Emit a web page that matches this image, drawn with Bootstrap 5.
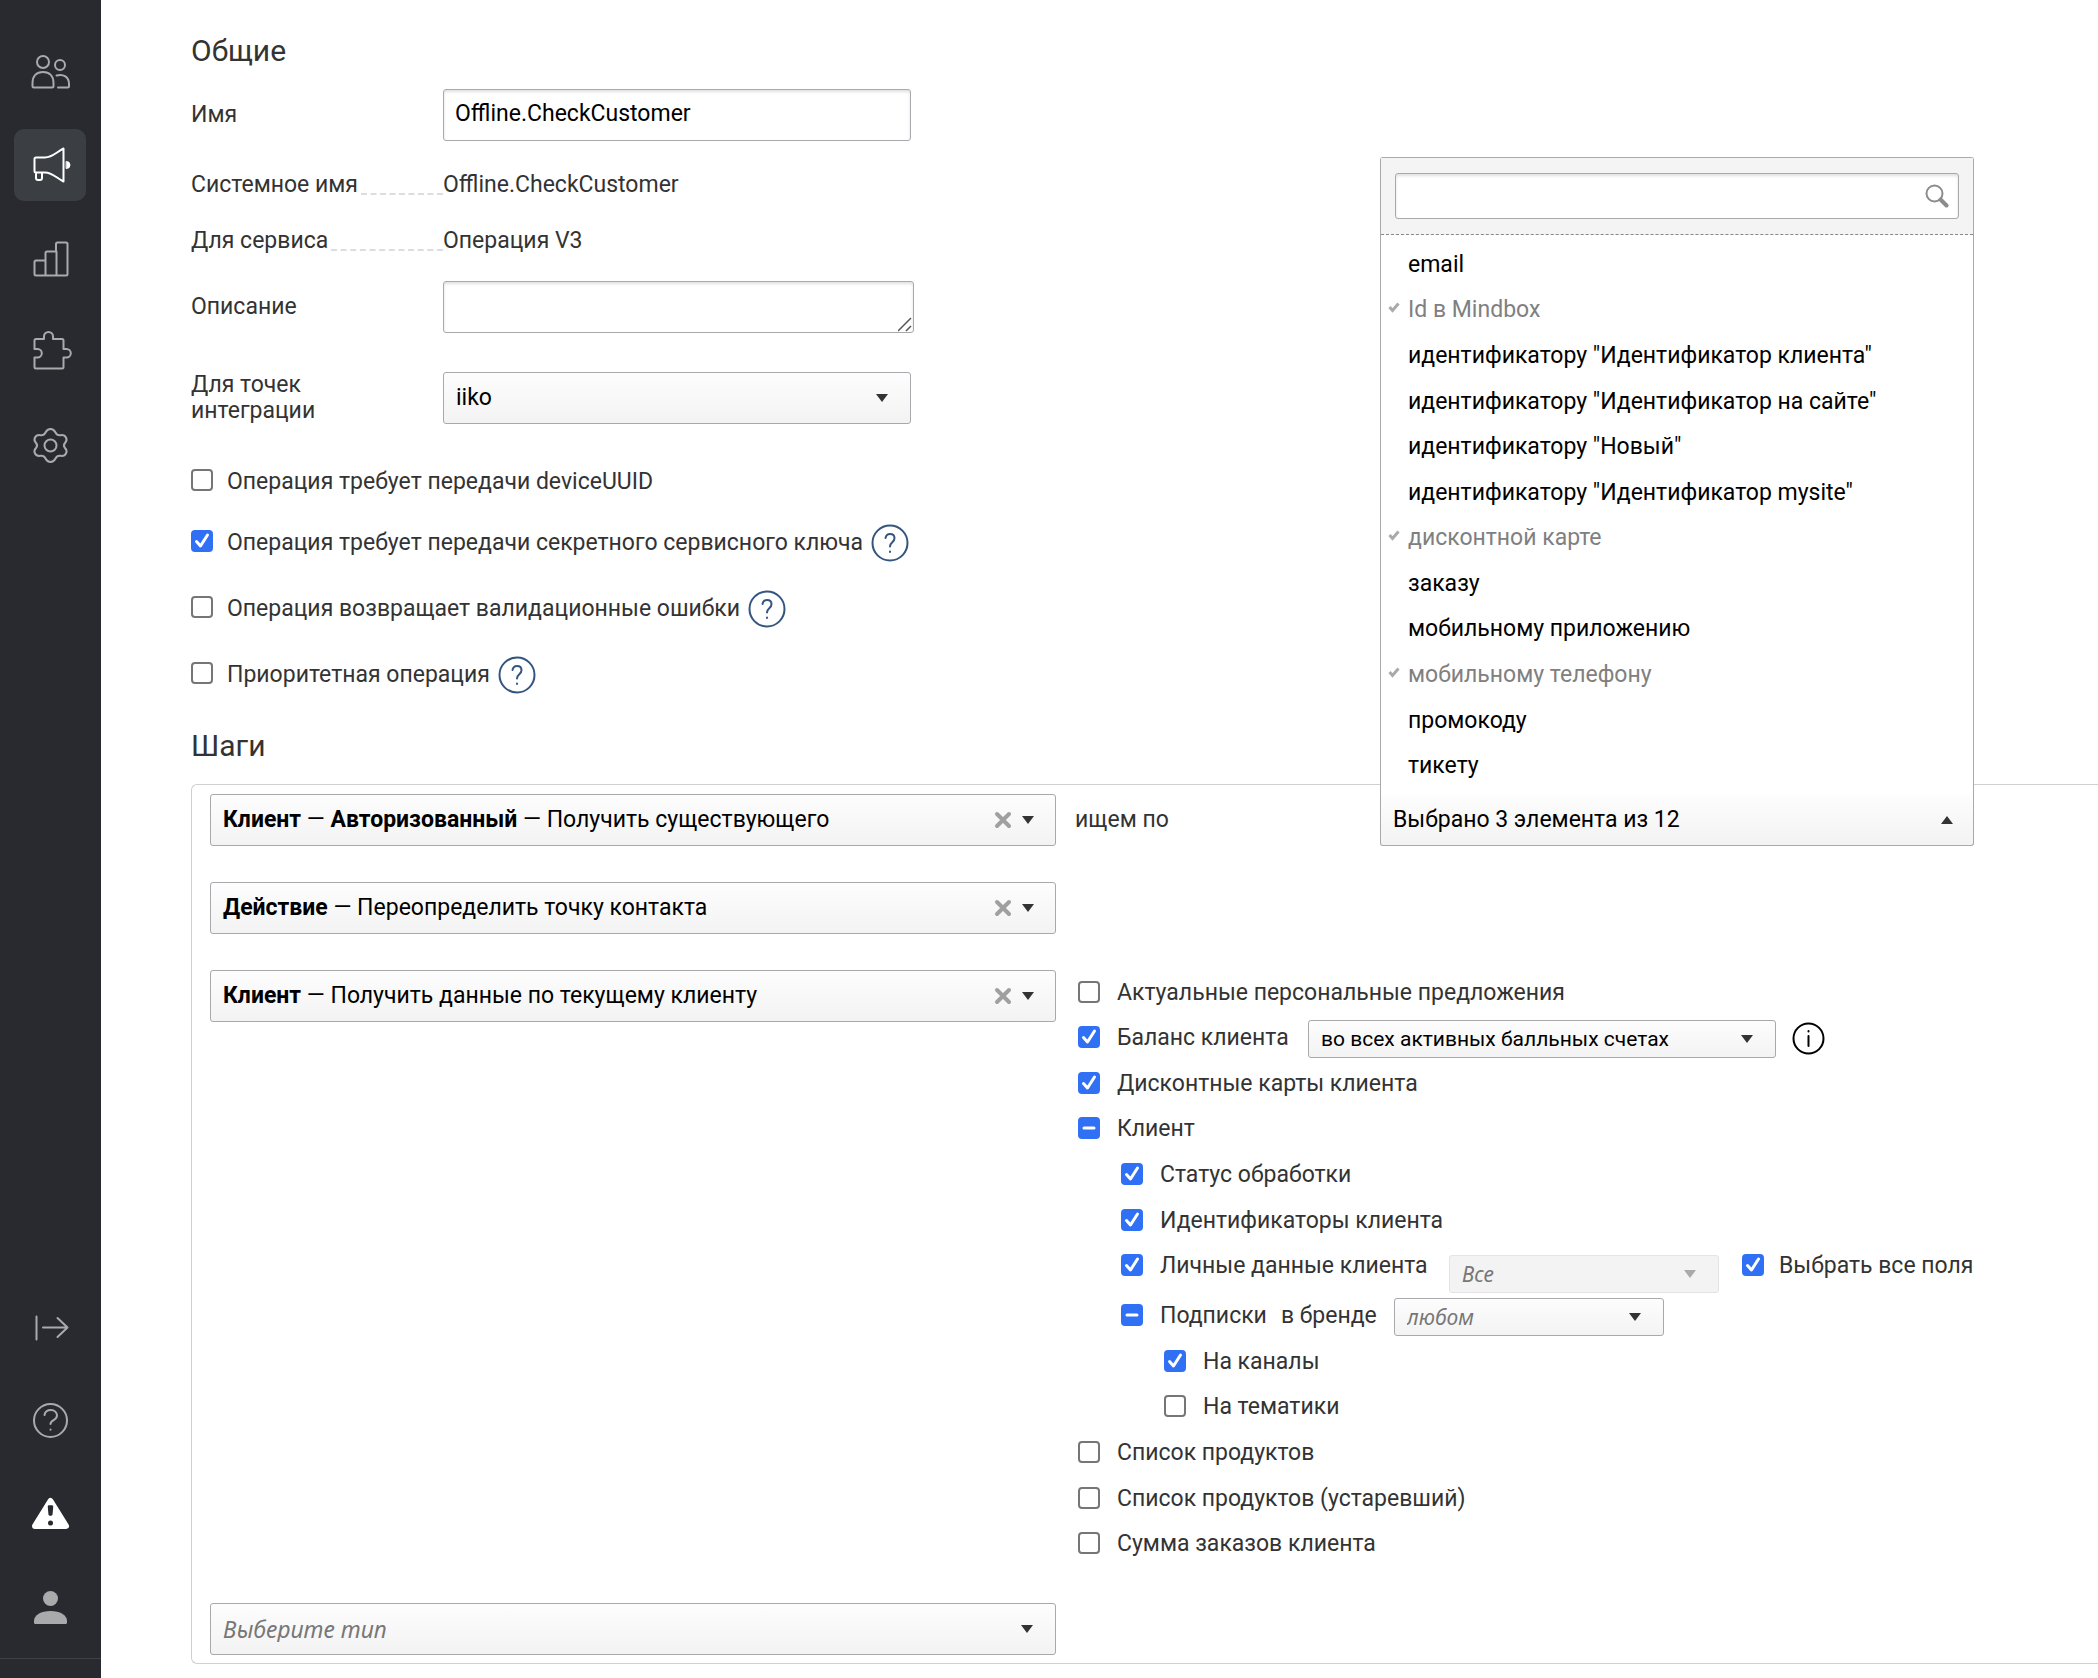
<!DOCTYPE html>
<html lang="ru">
<head>
<meta charset="utf-8">
<meta name="viewport" content="width=device-width, initial-scale=1">
<title>Offline.CheckCustomer</title>
<link rel="stylesheet" href="https://cdn.jsdelivr.net/npm/bootstrap@5.3.0/dist/css/bootstrap.min.css">
<style>
  :root { --fs: 23px; --fs-sm: 21px; --line: #a9a9ad; --blue: #3070f5; }
  body { font-family: Roboto, "Noto Sans", sans-serif; font-size: var(--fs); line-height: 26px; color: #333; background: #fff; }
  h2 { font-size: 30px; line-height: 40px; font-weight: 400; margin: 0; }

  .side { width: 101px; background: #292a2f; color: #a9aaac; padding: 36px 15px 0 14px; gap: 21px; }
  .side a { display: block; width: 72px; height: 72px; border-radius: 10px; color: inherit; }
  .side a.current { background: #3b3e42; color: #fff; }
  .side a.alerting { color: #fff; }
  .side svg { display: block; width: 72px; height: 72px; fill: none; stroke: currentColor; stroke-width: 2; stroke-linecap: round; stroke-linejoin: round; }
  .side-foot { height: 20px; margin: -5px -15px 0 -14px; border-top: 1px solid #3f4044; }

  .page { padding: 31px 0 14px 90px; min-width: 0; }
  .field-name { width: 252px; flex: none; }
  .field-box { width: 468px; }
  .field-first { margin-top: 18px; }
  .leader::after { content: ""; flex: 1; border-bottom: 2px dashed #ddd; margin: 0 0 3px 3px; align-self: flex-end; }
  .info-row { height: 56px; }
  .about-row { margin-top: 12px; }
  .point-row { margin-top: 39px; }

  .form-control, .form-select, .picker {
    font-size: var(--fs); line-height: 26px; color: #000; border: 1px solid var(--line); border-radius: 3px; height: 52px; padding: 0 12px;
  }
  .form-control { box-shadow: inset 0 2px 3px rgba(0,0,0,.12); padding: 0 11px 3px; }
  .form-select, .picker { background-color: #f9f9f9; background-image: linear-gradient(#fdfdfd, #f3f3f3); }
  .form-select {
    background-image: url("data:image/svg+xml,%3Csvg xmlns='http://www.w3.org/2000/svg' viewBox='0 0 12 8'%3E%3Cpath fill='%23333' d='M0 0h12L6 8z'/%3E%3C/svg%3E"), linear-gradient(#fdfdfd, #f3f3f3);
    background-size: 12px 8px, 100% 100%; background-position: right 22px center, 0 0; background-repeat: no-repeat; padding-right: 44px;
  }
  .form-select.small-box { height: 38px; font-size: var(--fs-sm); margin-top: 2px; }
  .form-select.hinted { font-family: "Noto Sans", sans-serif; font-style: italic; color: #777; }
  .form-select:disabled { opacity: 1; border-color: #e4e4e4; color: #777;
    background-image: url("data:image/svg+xml,%3Csvg xmlns='http://www.w3.org/2000/svg' viewBox='0 0 12 8'%3E%3Cpath fill='%23aaa' d='M0 0h12L6 8z'/%3E%3C/svg%3E"), linear-gradient(#f3f3f3, #f3f3f3); }
  textarea.form-control { width: 471px; min-height: 52px; }
  textarea::-webkit-resizer { background: url("data:image/svg+xml,%3Csvg xmlns='http://www.w3.org/2000/svg' viewBox='0 0 15 15'%3E%3Cpath stroke='%23555' stroke-width='1.500' d='M0 14L13 1M8 14l5-5'/%3E%3C/svg%3E") center / 15px 15px no-repeat; }

  .form-check-input, .form-check-input[type=checkbox] { flex: none; width: 22px; height: 22px; margin: 0 0 2px; border: 2px solid #767676; border-radius: 4px; background-color: #fff; }
  .form-check-input[type=checkbox]:checked, .form-check-input[type=checkbox]:indeterminate { background-color: var(--blue); border-color: var(--blue); background-size: 22px 22px; background-position: center; }
  .form-check-input[type=checkbox]:checked {
    background-image: url("data:image/svg+xml,%3Csvg xmlns='http://www.w3.org/2000/svg' viewBox='0 0 22 22'%3E%3Cpath fill='none' stroke='%23fff' stroke-width='3' stroke-linecap='round' stroke-linejoin='round' d='M5.500 11.500l4 4.500 7-11'/%3E%3C/svg%3E"); }
  .form-check-input[type=checkbox]:indeterminate {
    background-image: url("data:image/svg+xml,%3Csvg xmlns='http://www.w3.org/2000/svg' viewBox='0 0 22 22'%3E%3Cpath stroke='%23fff' stroke-width='3' stroke-linecap='round' d='M6 11h10'/%3E%3C/svg%3E"); }
  .flags { margin-top: 26px; }
  .flag { height: 66px; }
  .flag:first-child { height: 60px; padding-top: 4px; }
  .flag .form-check-input { margin-bottom: 4px; }
  .flag label { margin-left: 14px; }
  .hint { border: 0; padding: 0; background: none; display: block; flex: none; }
  .hint svg { display: block; fill: none; stroke: currentColor; stroke-width: 2; stroke-linecap: round; }
  .flag .hint { margin-left: 8px; color: #34557f; }

  .steps-title { margin: 18px 0; }
  .steps { border: 1px solid #d0d0d0; border-right: 0; border-radius: 6px 0 0 6px; padding: 9px 18px 8px; gap: 36px; }
  .step-side { margin-left: 19px; }
  .step-new { width: 846px; }
  .picker { width: 846px; padding: 0 21px 0 0; }
  .picker-text { border: 0; background: none; color: #000; height: 100%; padding: 0 0 0 12px; text-align: left; }
  .picker svg { display: block; }
  .picker .caret { margin-left: 10px; flex: none; }
  .picker-icon { border: 0; background: none; padding: 0; flex: none; }
  .step-word { width: 305px; }
  .multi { width: 594px; position: relative; z-index: 2; }
  .multi > .picker { width: 100%; padding: 0 20px 0 12px; border-top-color: transparent; border-radius: 0 0 3px 3px; }
  .multi-menu { position: absolute; left: 0; right: 0; bottom: 51px; background: #fff; border: 1px solid var(--line); border-bottom: 0; border-radius: 3px 3px 0 0; }
  .multi-find { background: #f4f4f4; padding: 15px 14px; border-bottom: 1px dashed #888; position: relative; }
  .multi-find .form-control { height: 46px; }
  .multi-find svg { position: absolute; right: 24px; top: 26px; }
  .multi-list { display: grid; grid-auto-rows: 1fr; height: 560px; padding: 7px 0 6px; margin: 0; list-style: none; }
  .multi-list button { border: 0; background: none; width: 100%; height: 100%; padding: 0 12px 0 7px; color: #000; text-align: left; display: flex; align-items: center; }
  .multi-list .tick { width: 20px; flex: none; display: block; }
  .multi-list .tick svg { display: block; }
  .multi-list .taken { color: #808080; }

  .tree-rows { display: grid; grid-auto-rows: 1fr; }
  .tree { padding-left: 3px; }
  .tree-top { height: 319px; }
  .tree-mid { height: 50px; padding-top: 4px; }
  .tree-low { height: 228px; }
  .tree label { margin-left: 17px; }
  .deep-1 { padding-left: 43px; }
  .deep-2 { padding-left: 86px; }
  .w-mid { width: 270px; }
  .tree .balance-name { width: 191px; }
  .tree .personal-name { width: 289px; }
  .form-select.personal-box { align-self: flex-end; margin: 0 23px -4px 0; }
  .tree .all-name { margin-left: 15px; }
  .tree .brand-name { margin: 0 17px 0 14px; }
</style>
<script src="https://cdn.jsdelivr.net/npm/bootstrap@5.3.0/dist/js/bootstrap.bundle.min.js"></script>
</head>
<body>
<div class="d-flex min-vh-100">
  <nav class="side d-flex flex-column flex-shrink-0" aria-label="Разделы">
    <a href="#" aria-label="Клиенты"><svg viewBox="0 0 72 72"><circle cx="29" cy="26" r="6"/><circle cx="46" cy="29" r="5"/><path d="M18.500 47c0-7 4-11 10.500-11s10.500 4 10.500 11v3q0 1.500-1.500 1.500H20q-1.500 0-1.500-1.500zM42.500 39.500c7-2 12.500 1.500 12.500 8.500v2q0 1.500-1.500 1.500H44"/></svg></a>
    <a href="#" class="current" aria-label="Кампании"><svg viewBox="0 0 72 72"><path d="M20.500 30q0-1.500 1.500-1.500h9c7 0 11-5 18.500-9v33c-7.500-4-11.500-9-18.500-9h-9q-1.500 0-1.500-1.500zM22 43.500V49q0 2 2 2h2q2 0 2-2v-5.500"/><path d="M52.500 32.500a3.500 3.500 0 0 1 0 7z" fill="currentColor" stroke-width="1"/></svg></a>
    <a href="#" aria-label="Отчёты"><svg viewBox="0 0 72 72"><path d="M20.500 40q0-1.500 1.500-1.500h9.500V31q0-1.500 1.500-1.500h9V22q0-1.500 1.500-1.500H52q1.500 0 1.500 1.500v30q0 1.500-1.500 1.500H22q-1.500 0-1.500-1.500zM31.500 38.500v15M42.500 29.500v24"/></svg></a>
    <a href="#" aria-label="Интеграции"><svg viewBox="0 0 72 72"><path d="M22 24h8v-2.500a4.500 4.500 0 0 1 9 0V24h9q1.500 0 1.500 1.500V34h3a4.300 4.300 0 0 1 0 8.600h-3V52q0 1.500-1.500 1.500H22q-1.500 0-1.500-1.500v-9.400h3a4.300 4.300 0 0 0 0-8.600h-3v-8.500Q20.500 24 22 24z"/></svg></a>
    <a href="#" aria-label="Настройки"><svg viewBox="0 0 72 72"><circle cx="36.500" cy="37.500" r="6"/><path d="M36.500 21c3 0 4 1.500 5 3.500 1 2 3 3 5 2.700 3-.4 4.500.3 5.500 2.300 1.300 2.500.5 4-1 5.500-1.300 1.500-1.300 3.500 0 5 1.500 1.500 2.300 3 1 5.500-1 2-2.500 2.700-5.500 2.300-2-.3-4 .7-5 2.700-1 2-2 3.500-5 3.500s-4-1.500-5-3.500c-1-2-3-3-5-2.700-3 .4-4.500-.3-5.500-2.300-1.300-2.500-.5-4 1-5.500 1.300-1.500 1.300-3.500 0-5-1.500-1.500-2.300-3-1-5.500 1-2 2.500-2.700 5.500-2.300 2 .3 4-.7 5-2.700 1-2 2-3.500 5-3.500z"/></svg></a>
    <a href="#" class="mt-auto" aria-label="Развернуть"><svg viewBox="0 0 72 72"><path d="M22.500 25.500v23M29 36.500h24M43.500 27l10 9.500-10 9.500"/></svg></a>
    <a href="#" aria-label="Помощь"><svg viewBox="0 0 72 72"><circle cx="36.500" cy="36.500" r="16.500"/><path d="M30.500 31c.5-3 3-5 6.500-5s6 2.500 6 5.500c0 5-6.500 4-6.500 8.500M36.500 45.500v.3"/></svg></a>
    <a href="#" class="alerting" aria-label="Предупреждения"><svg viewBox="0 0 72 72"><path d="M36.500 24L52 49H21z" fill="currentColor" stroke-width="6"/><path d="M35 29.500l.7 8h1.600l.7-8z" fill="#292a2f" stroke="#292a2f" stroke-width="2.500"/><path d="M36.500 46v.1" stroke="#292a2f" stroke-width="5"/></svg></a>
    <a href="#" aria-label="Профиль"><svg viewBox="0 0 72 72"><g fill="currentColor" stroke="none"><circle cx="36.500" cy="28.500" r="7.500"/><path d="M20 51c0-6 7-10 16.500-10S53 45 53 51v1.500q0 1.500-1.500 1.500h-30Q20 54 20 52.500z"/></g></svg></a>
    <div class="side-foot"></div>
  </nav>

  <main class="page flex-fill">
    <form>
      <h2>Общие</h2>
      <div class="d-flex align-items-center field-first">
        <label class="field-name" for="opName">Имя</label>
        <input class="form-control field-box" id="opName" type="text" value="Offline.CheckCustomer">
      </div>
      <dl class="mb-0 mt-3">
        <div class="info-row d-flex align-items-center"><dt class="field-name fw-normal d-flex leader">Системное имя</dt><dd class="mb-0">Offline.CheckCustomer</dd></div>
        <div class="info-row d-flex align-items-center"><dt class="field-name fw-normal d-flex leader">Для сервиса</dt><dd class="mb-0">Операция V3</dd></div>
      </dl>
      <div class="d-flex align-items-center about-row">
        <label class="field-name" for="opAbout">Описание</label>
        <textarea class="form-control" id="opAbout" rows="1"></textarea>
      </div>
      <div class="d-flex align-items-center point-row">
        <label class="field-name" for="opPoint">Для точек<br>интеграции</label>
        <select class="form-select field-box" id="opPoint"><option>iiko</option></select>
      </div>
      <div class="flags">
        <div class="flag d-flex align-items-center"><input class="form-check-input" type="checkbox" id="f1"><label for="f1">Операция требует передачи deviceUUID</label></div>
        <div class="flag d-flex align-items-center"><input class="form-check-input" type="checkbox" id="f2" checked><label for="f2">Операция требует передачи секретного сервисного ключа</label><button type="button" class="hint" aria-label="Подсказка"><svg width="38" height="38" viewBox="0 0 38 38"><circle cx="19" cy="19" r="17.500"/><path d="M14.500 14c.5-2.500 2-4 4.500-4s4.500 1.500 4.500 4.300c0 4-4.500 4-4.500 8.200M19 27.500v.5"/></svg></button></div>
        <div class="flag d-flex align-items-center"><input class="form-check-input" type="checkbox" id="f3"><label for="f3">Операция возвращает валидационные ошибки</label><button type="button" class="hint" aria-label="Подсказка"><svg width="38" height="38" viewBox="0 0 38 38"><circle cx="19" cy="19" r="17.500"/><path d="M14.500 14c.5-2.500 2-4 4.500-4s4.500 1.500 4.500 4.300c0 4-4.500 4-4.500 8.200M19 27.500v.5"/></svg></button></div>
        <div class="flag d-flex align-items-center"><input class="form-check-input" type="checkbox" id="f4"><label for="f4">Приоритетная операция</label><button type="button" class="hint" aria-label="Подсказка"><svg width="38" height="38" viewBox="0 0 38 38"><circle cx="19" cy="19" r="17.500"/><path d="M14.500 14c.5-2.500 2-4 4.500-4s4.500 1.500 4.500 4.300c0 4-4.500 4-4.500 8.200M19 27.500v.5"/></svg></button></div>
      </div>

      <h2 class="steps-title">Шаги</h2>
      <div class="steps d-flex flex-column">
        <div class="step d-flex">
          <div class="picker d-flex align-items-center flex-shrink-0">
            <button type="button" class="picker-text flex-fill"><b>Клиент</b> — <b>Авторизованный</b> — Получить существующего</button>
            <button type="button" class="picker-icon" aria-label="Очистить"><svg width="18" height="18" viewBox="0 0 18 18"><path d="M3 3l12 12M15 3L3 15" stroke="#a0a0a0" stroke-width="4" stroke-linecap="round"/></svg></button>
            <svg class="caret" width="12" height="8" viewBox="0 0 12 8"><path fill="#333" d="M0 0h12L6 8z"/></svg>
          </div>
          <div class="step-side d-flex align-items-center">
            <span class="step-word">ищем по</span>
            <div class="multi">
              <button type="button" class="picker d-flex align-items-center justify-content-between">Выбрано 3 элемента из 12<svg width="12" height="8" viewBox="0 0 12 8"><path fill="#333" d="M0 8h12L6 0z"/></svg></button>
              <div class="multi-menu">
                <div class="multi-find"><input type="search" class="form-control" aria-label="Поиск"><svg width="24" height="24" viewBox="0 0 24 24" fill="none" stroke="#8c8c8c" stroke-linecap="round"><circle cx="9.500" cy="9.500" r="8" stroke-width="2"/><path d="M15.500 15.500l6 6" stroke-width="4"/></svg></div>
                <ul class="multi-list">
                  <li><button type="button"><span class="tick"></span>email</button></li>
                  <li><button type="button" class="taken"><span class="tick"><svg width="12" height="16" viewBox="0 0 12 16"><path d="M1.500 5l3 3.500 6-7" fill="none" stroke="#aaa" stroke-width="3"/></svg></span>Id в Mindbox</button></li>
                  <li><button type="button"><span class="tick"></span>идентификатору "Идентификатор клиента"</button></li>
                  <li><button type="button"><span class="tick"></span>идентификатору "Идентификатор на сайте"</button></li>
                  <li><button type="button"><span class="tick"></span>идентификатору "Новый"</button></li>
                  <li><button type="button"><span class="tick"></span>идентификатору "Идентификатор mysite"</button></li>
                  <li><button type="button" class="taken"><span class="tick"><svg width="12" height="16" viewBox="0 0 12 16"><path d="M1.500 5l3 3.500 6-7" fill="none" stroke="#aaa" stroke-width="3"/></svg></span>дисконтной карте</button></li>
                  <li><button type="button"><span class="tick"></span>заказу</button></li>
                  <li><button type="button"><span class="tick"></span>мобильному приложению</button></li>
                  <li><button type="button" class="taken"><span class="tick"><svg width="12" height="16" viewBox="0 0 12 16"><path d="M1.500 5l3 3.500 6-7" fill="none" stroke="#aaa" stroke-width="3"/></svg></span>мобильному телефону</button></li>
                  <li><button type="button"><span class="tick"></span>промокоду</button></li>
                  <li><button type="button"><span class="tick"></span>тикету</button></li>
                </ul>
              </div>
            </div>
          </div>
        </div>

        <div class="step d-flex">
          <div class="picker d-flex align-items-center flex-shrink-0">
            <button type="button" class="picker-text flex-fill"><b>Действие</b> — Переопределить точку контакта</button>
            <button type="button" class="picker-icon" aria-label="Очистить"><svg width="18" height="18" viewBox="0 0 18 18"><path d="M3 3l12 12M15 3L3 15" stroke="#a0a0a0" stroke-width="4" stroke-linecap="round"/></svg></button>
            <svg class="caret" width="12" height="8" viewBox="0 0 12 8"><path fill="#333" d="M0 0h12L6 8z"/></svg>
          </div>
        </div>

        <div class="step d-flex">
          <div class="picker d-flex align-items-center flex-shrink-0">
            <button type="button" class="picker-text flex-fill"><b>Клиент</b> — Получить данные по текущему клиенту</button>
            <button type="button" class="picker-icon" aria-label="Очистить"><svg width="18" height="18" viewBox="0 0 18 18"><path d="M3 3l12 12M15 3L3 15" stroke="#a0a0a0" stroke-width="4" stroke-linecap="round"/></svg></button>
            <svg class="caret" width="12" height="8" viewBox="0 0 12 8"><path fill="#333" d="M0 0h12L6 8z"/></svg>
          </div>
          <div class="step-side">
            <div class="tree">
              <div class="tree-rows tree-top">
                <div class="d-flex align-items-center"><input class="form-check-input" type="checkbox" id="t1"><label for="t1">Актуальные персональные предложения</label></div>
                <div class="d-flex align-items-center"><input class="form-check-input" type="checkbox" id="t2" checked><label class="balance-name" for="t2">Баланс клиента</label><select class="form-select small-box field-box" aria-label="Счета"><option>во всех активных балльных счетах</option></select><button type="button" class="hint ms-3 text-black" aria-label="Информация"><svg width="33" height="33" viewBox="0 0 33 33"><circle cx="16.500" cy="16.500" r="15"/><path d="M16.500 14v10M16.500 9v.5"/></svg></button></div>
                <div class="d-flex align-items-center"><input class="form-check-input" type="checkbox" id="t3" checked><label for="t3">Дисконтные карты клиента</label></div>
                <div class="d-flex align-items-center"><input class="form-check-input partial" type="checkbox" id="t4"><label for="t4">Клиент</label></div>
                <div class="d-flex align-items-center deep-1"><input class="form-check-input" type="checkbox" id="t5" checked><label for="t5">Статус обработки</label></div>
                <div class="d-flex align-items-center deep-1"><input class="form-check-input" type="checkbox" id="t6" checked><label for="t6">Идентификаторы клиента</label></div>
                <div class="d-flex align-items-center deep-1"><input class="form-check-input" type="checkbox" id="t7" checked><label class="personal-name" for="t7">Личные данные клиента</label><select class="form-select small-box hinted w-mid personal-box" aria-label="Поля" disabled><option>Все</option></select><input class="form-check-input" type="checkbox" id="t8" checked><label class="all-name" for="t8">Выбрать все поля</label></div>
              </div>
              <div class="tree-mid d-flex align-items-center deep-1"><input class="form-check-input partial" type="checkbox" id="t9"><label for="t9">Подписки</label><label class="brand-name" for="brand">в бренде</label><select class="form-select small-box hinted w-mid" id="brand"><option>любом</option></select></div>
              <div class="tree-rows tree-low">
                <div class="d-flex align-items-center deep-2"><input class="form-check-input" type="checkbox" id="t10" checked><label for="t10">На каналы</label></div>
                <div class="d-flex align-items-center deep-2"><input class="form-check-input" type="checkbox" id="t11"><label for="t11">На тематики</label></div>
                <div class="d-flex align-items-center"><input class="form-check-input" type="checkbox" id="t12"><label for="t12">Список продуктов</label></div>
                <div class="d-flex align-items-center"><input class="form-check-input" type="checkbox" id="t13"><label for="t13">Список продуктов (устаревший)</label></div>
                <div class="d-flex align-items-center"><input class="form-check-input" type="checkbox" id="t14"><label for="t14">Сумма заказов клиента</label></div>
              </div>
            </div>
          </div>
        </div>

        <select class="form-select hinted step-new" aria-label="Выберите тип"><option>Выберите тип</option></select>
      </div>
    </form>
  </main>
</div>
<script>
  document.querySelectorAll('.partial').forEach(function (box) { box.indeterminate = true; });
</script>
</body>
</html>
